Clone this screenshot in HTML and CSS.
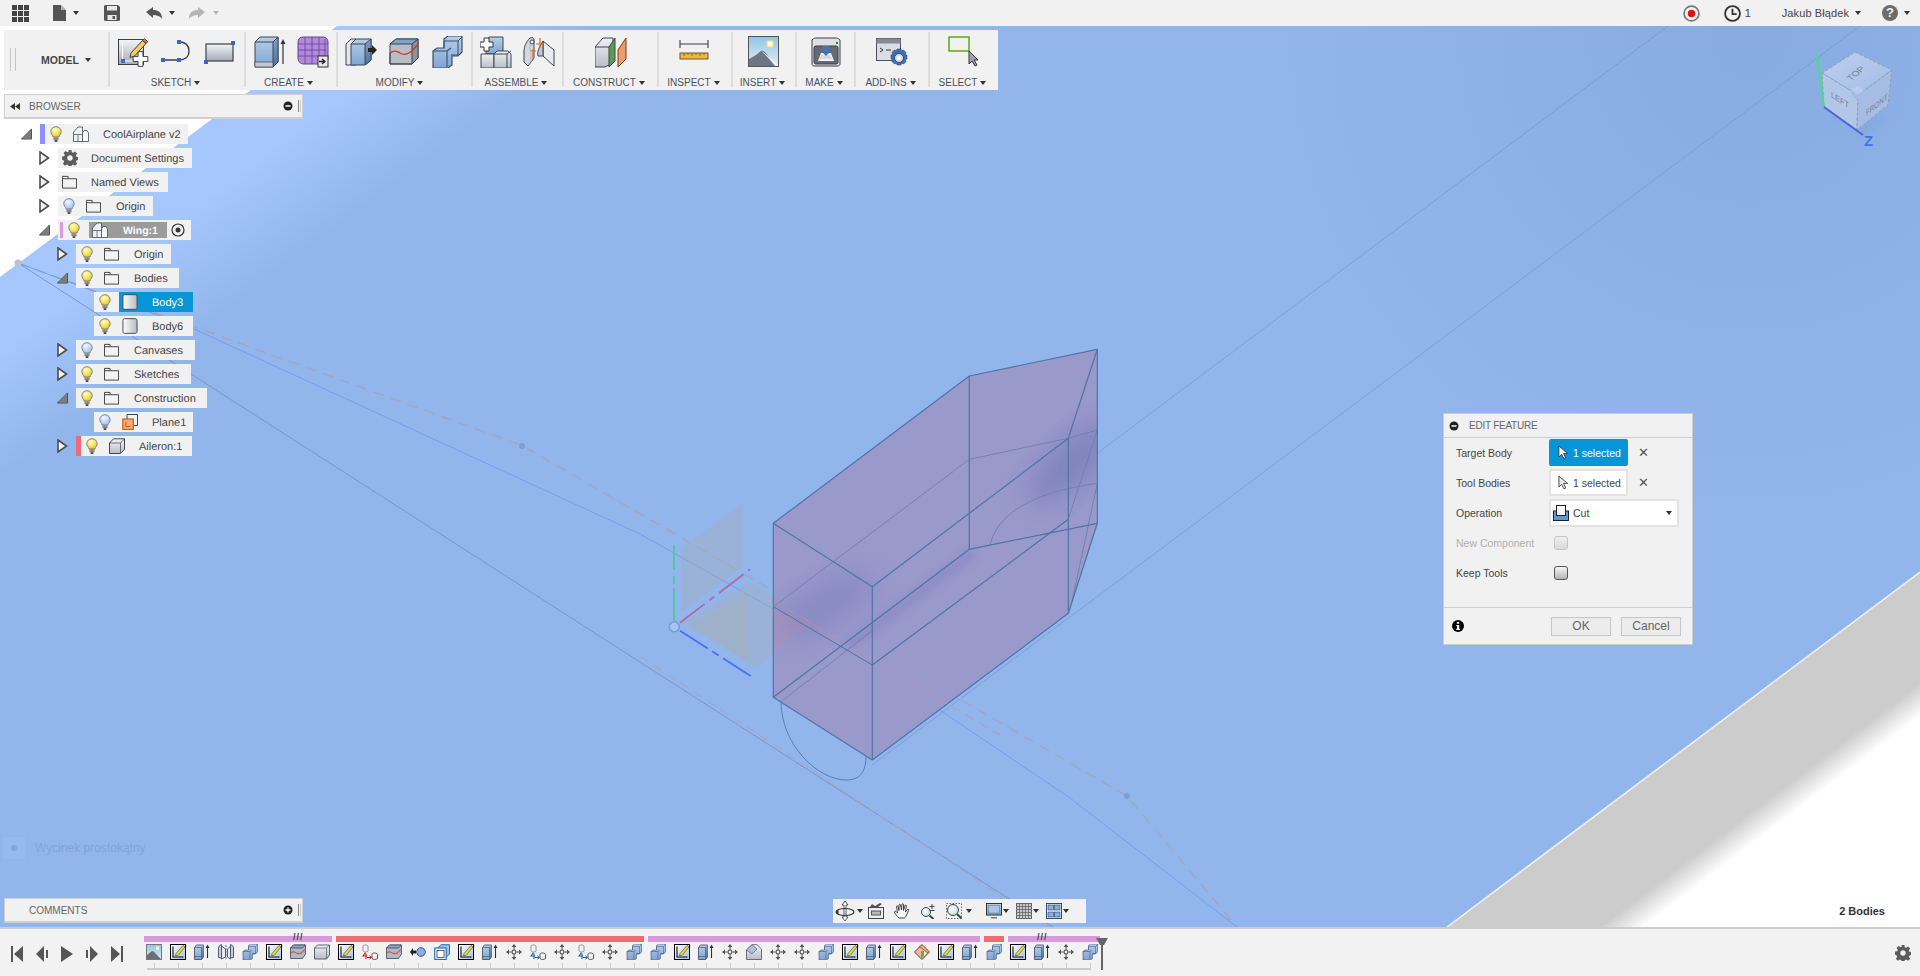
FILE: index.html
```html
<!DOCTYPE html>
<html lang="en">
<head>
<meta charset="utf-8">
<title>CoolAirplane v2</title>
<link rel="stylesheet" href="styles.css">
</head>
<body>
<svg class="sprite" aria-hidden="true">
  <defs>
    <linearGradient id="gBlue" x1="0" y1="0" x2="0" y2="1"><stop offset="0" stop-color="#b6cfe9"/><stop offset="1" stop-color="#7fa5d3"/></linearGradient>
    <linearGradient id="gSide" x1="0" y1="0" x2="0" y2="1"><stop offset="0" stop-color="#7ea0c8"/><stop offset="1" stop-color="#4f739f"/></linearGradient>
    <linearGradient id="gGrey" x1="0" y1="0" x2="0" y2="1"><stop offset="0" stop-color="#f1f2f5"/><stop offset="1" stop-color="#b9bdc6"/></linearGradient>
    <linearGradient id="gRect" x1="0" y1="0" x2="0" y2="1"><stop offset="0" stop-color="#f4f5f8"/><stop offset="1" stop-color="#a4a9b8"/></linearGradient>
    <linearGradient id="gSky" x1="0" y1="0" x2="0" y2="1"><stop offset="0" stop-color="#8fc5e6"/><stop offset="1" stop-color="#e3eff3"/></linearGradient>
    <linearGradient id="gSketch" x1="0" y1="0" x2="1" y2="1"><stop offset="0" stop-color="#ffffff"/><stop offset="1" stop-color="#9cc2e6"/></linearGradient>
    <linearGradient id="gCyl" x1="0" y1="0" x2="1" y2="0"><stop offset="0" stop-color="#ffffff"/><stop offset="1" stop-color="#b7bac0"/></linearGradient>
    <radialGradient id="gBulbY" cx=".4" cy=".3" r=".7"><stop offset="0" stop-color="#fffbd0"/><stop offset=".6" stop-color="#f9e35c"/><stop offset="1" stop-color="#e8c52c"/></radialGradient>
    <radialGradient id="gBulbB" cx=".4" cy=".3" r=".7"><stop offset="0" stop-color="#f4f7ff"/><stop offset="1" stop-color="#a3bfee"/></radialGradient>
    <radialGradient id="gLens" cx=".4" cy=".4" r=".7"><stop offset="0" stop-color="#ffffff"/><stop offset="1" stop-color="#b9d9dd"/></radialGradient>
    <filter id="blur4" x="-30%" y="-30%" width="160%" height="160%"><feGaussianBlur stdDeviation="5"/></filter>
    <filter id="blur8" x="-40%" y="-40%" width="180%" height="180%"><feGaussianBlur stdDeviation="14"/></filter>
  </defs>

  <symbol id="i-bulb-y" viewBox="0 0 12 17"><path d="M6 .7C3 .7.8 2.9.8 5.6c0 2.2 1.6 3.1 2.3 5.4h5.8c.7-2.3 2.3-3.2 2.3-5.4C11 2.9 9 .7 6 .7z" fill="url(#gBulbY)" stroke="#77757a" stroke-width=".9"/><path d="M3.4 11.2h5.2v2.8H3.4z" fill="#8b8b8b"/><path d="M4.6 14h2.8v2H4.6z" fill="#555"/></symbol>
  <symbol id="i-bulb-b" viewBox="0 0 12 17"><path d="M6 .7C3 .7.8 2.9.8 5.6c0 2.2 1.6 3.1 2.3 5.4h5.8c.7-2.3 2.3-3.2 2.3-5.4C11 2.9 9 .7 6 .7z" fill="url(#gBulbB)" stroke="#6f7c95" stroke-width=".9"/><path d="M3.4 11.2h5.2v2.8H3.4z" fill="#8b8b8b"/><path d="M4.6 14h2.8v2H4.6z" fill="#555"/></symbol>
  <symbol id="i-folder" viewBox="0 0 16 14"><path d="M.5 1h6v2.500h9v10H.5z" fill="#f3f3f3" stroke="#3d3d3d"/><path d="M.5 3.500h6" stroke="#3d3d3d"/></symbol>
  <symbol id="i-gear" viewBox="0 0 16 16"><path d="M6.6 0h2.8l.4 2.200 1.400.6 1.900-1.300 2 2-1.300 1.900.6 1.400 2.100.4v2.800l-2.100.4-.6 1.400 1.300 1.900-2 2-1.900-1.300-1.400.6-.4 2.100H6.600l-.4-2.100-1.400-.6-1.900 1.300-2-2 1.300-1.900-.6-1.400L0 9.400V6.600l2.200-.4.6-1.400L1.500 2.900l2-2 1.900 1.300 1.400-.6z" fill="#5c5c5c"/><circle cx="8" cy="8" r="2.700" fill="#f1f1f1"/></symbol>
  <symbol id="i-comp" viewBox="0 0 16 16"><path d="M.5 6L5 1h4.500v14.500H.5z" fill="#eef0f4" stroke="#555b68" stroke-width=".9"/><path d="M9.500 7l1.500-2.500h3L15.500 7v8.500h-6z" fill="#f8f8fa" stroke="#555b68" stroke-width=".9"/><path d="M.5 8.500h9M5 8.500v7" stroke="#555b68" stroke-width=".8" fill="none"/></symbol>
  <symbol id="i-body" viewBox="0 0 16 17"><path d="M2.500.7h11c1.200 0 2 .8 2 2v11.600c0 1.200-.8 2-2 2h-11c-1.200 0-2-.8-2-2V2.700c0-1.200.8-2 2-2z" fill="url(#gCyl)" stroke="#3f4552"/></symbol>
  <symbol id="i-plane" viewBox="0 0 16 16"><path d="M5 .5h10.500v11H12" fill="none" stroke="#3f4552"/><path d="M5 .5V5" fill="none" stroke="#3f4552"/><rect x=".8" y="5" width="10.500" height="10.500" fill="#f6ac72" stroke="#cb5c1e" stroke-width="1.200"/><path d="M3.800 8v4.500h4.500" fill="none" stroke="#cb5c1e"/></symbol>
  <symbol id="i-box" viewBox="0 0 16 16"><path d="M.5 5L4.500.8h11v10.500L11.500 15.500H.5z" fill="url(#gGrey)" stroke="#3f4552"/><path d="M.5 5h11v10.500M11.500 5l4-4.200" fill="none" stroke="#3f4552" stroke-width=".7"/></symbol>
  <symbol id="i-radio" viewBox="0 0 14 14"><circle cx="7" cy="7" r="6" fill="#f1f1f1" stroke="#333" stroke-width="1.200"/><circle cx="7" cy="7" r="2.500" fill="#333"/></symbol>
  <symbol id="i-open" viewBox="0 0 11 14"><path d="M1 1l8.500 6L1 13z" fill="#f4f4f4" stroke="#4d4d4d" stroke-width="1.600"/></symbol>
  <symbol id="i-down" viewBox="0 0 12 12"><path d="M11.500.5V11.500H.5z" fill="#8d8d8d" stroke="#444"/><path d="M11 1.500V11H2z" fill="#7c7c7c"/></symbol>

  <symbol id="i-sketch" viewBox="0 0 32 32"><rect x=".5" y="3.500" width="25" height="25" fill="url(#gRect)" stroke="#3c3f47"/><path d="M4.500 6v19H24" fill="none" stroke="#fff"/><rect x="3" y="23" width="4" height="4" fill="#3e6fc8"/><path d="M13 17L24.500 4.500l3.500 3L16.500 20l-4.500 1.500z" fill="#f5cf5c" stroke="#3c3f47"/><path d="M24.500 4.500l1.800-1.800 3.500 3-1.800 1.800z" fill="#d97b52" stroke="#3c3f47"/><path d="M22 16.500h5v5h5v5h-5v5h-5v-5h-5v-5h5z" transform="translate(-1.500 -.5) scale(.98)" fill="#fff" stroke="#3c3f47"/></symbol>
  <symbol id="i-line" viewBox="0 0 32 32"><path d="M2 24h16c6 0 10-3 10-9 0-6-4-9-10-9" fill="none" stroke="#3c3f47" stroke-width="1.300"/><g fill="#3268c9"><rect y="22" width="4" height="4"/><rect x="16" y="22" width="4" height="4"/><rect x="16" y="4" width="4" height="4"/></g></symbol>
  <symbol id="i-rect" viewBox="0 0 32 32"><rect x="2" y="8" width="27" height="17" fill="url(#gRect)" stroke="#3c3f47" stroke-width="1.200"/><rect x="27" y="5" width="4" height="4" fill="#3268c9"/><rect y="24" width="4" height="4" fill="#3268c9"/></symbol>
  <symbol id="i-extrude" viewBox="0 0 32 32"><path d="M1 6l5-5h18v25l-5 5H1z" fill="url(#gBlue)" stroke="#3f4552"/><path d="M19 6l5-5v25l-5 5z" fill="url(#gSide)" stroke="#3f4552"/><path d="M1 6h18M6 1" fill="none" stroke="#3f4552"/><path d="M1 26h18v5H1z" fill="#c5c8cf" stroke="#3f4552" stroke-width=".7"/><path d="M29 28V6" stroke="#333" stroke-width="1.200"/><path d="M29 3l2.500 5h-5z" fill="#333"/></symbol>
  <symbol id="i-mesh" viewBox="0 0 32 32"><path d="M6 1h20c3 0 5 2 5 5v16c0 4-3 6-6 6H7c-4 0-6-3-6-6V6c0-3 2-5 5-5z" fill="#b485e4" stroke="#5d4a7c"/><path d="M1 8h30M1 14h28M1 20h26M8 1v27M15 1v27M22 1v27M28 3v18" fill="none" stroke="#5d4a7c" stroke-width=".8"/><rect x="21" y="20" width="10" height="11" fill="#e8e8e8" stroke="#333"/><path d="M22 25.500h5M25 23l3 2.500-3 2.500" fill="none" stroke="#222" stroke-width="1.300"/></symbol>
  <symbol id="i-press" viewBox="0 0 32 32"><path d="M1 8l5-5h5v26H1z" fill="#e4e6ea" stroke="#3f4552"/><path d="M6 8l5-5h15v21l-6 5H6z" fill="url(#gBlue)" stroke="#3f4552"/><path d="M20 8l6-5v21l-6 5z" fill="url(#gSide)" stroke="#3f4552"/><path d="M6 8h14" stroke="#3f4552"/><path d="M23 12h4V9l5 5-5 5v-3h-4z" fill="#222"/></symbol>
  <symbol id="i-fillet" viewBox="0 0 32 32"><path d="M2 8l6-5h22v19l-6 6H2z" fill="#b8bdc6" stroke="#3f4552"/><path d="M2 8l6-5h22l-6 5z" fill="#7da4d1" stroke="#3f4552"/><path d="M24 8l6-5v19l-6 6z" fill="#8d929c" stroke="#3f4552"/><path d="M2 17c4-3 7-2 10 0s7 2 12-2l6-7" fill="none" stroke="#d8301f" stroke-width="1.200"/><path d="M2 17v11h22" fill="none" stroke="#3f4552"/></symbol>
  <symbol id="i-combine" viewBox="0 0 32 32"><path d="M2 15l4-3h7V3l4-3h14v16l-4 4h-6v9l-4 3H2z" fill="url(#gBlue)" stroke="#3a4f6e" stroke-width="1.200"/><path d="M13 12V5h14v14h-7" fill="none" stroke="#3a4f6e"/><path d="M2 15h14v16M16 15l4-3" fill="none" stroke="#3a4f6e" stroke-width="1.100"/><path d="M27 5l4-4" stroke="#3a4f6e"/></symbol>
  <symbol id="i-newcomp" viewBox="0 0 32 32"><path d="M6 4l3-3h14v14l-3 3H6z" fill="url(#gBlue)" stroke="#3f4552"/><path d="M1 18h13v14H1z" fill="url(#gGrey)" stroke="#3f4552"/><path d="M14 18l3-3h11l3 3v14H14z" fill="url(#gGrey)" stroke="#3f4552"/><path d="M14 18h13l4-3M27 18v14" fill="none" stroke="#3f4552"/><path d="M4 2h5v4h4v5H9v4H4v-4H0V6h4z" fill="#fff" stroke="#333"/></symbol>
  <symbol id="i-joint" viewBox="0 0 32 32"><path d="M1 15c0-4 2-9 6-13 3-1 4 0 4 2v18l-6 8-4-4z" fill="#d4d7de" stroke="#3f4552"/><circle cx="9" cy="6" r="2" fill="#fff" stroke="#3f4552"/><path d="M7 8v6M8 17v9" stroke="#b5b8c0"/><path d="M20 5l11 9v16l-11-10z" fill="#e9ebee" stroke="#3f4552"/><path d="M15 20c-1-4 1-9 5-15v15z" fill="#c3c7cf" stroke="#3f4552"/><path d="M17 2v10M13 8h8M10 13v10M7 15h6" stroke="#e56b1b" stroke-width="1.200"/></symbol>
  <symbol id="i-construct" viewBox="0 0 32 32"><path d="M0 11l8-9h10v25l-8 4H0z" fill="url(#gGrey)" stroke="#3f4552"/><path d="M14 11l6-9v23l-6 6z" fill="#5c9a52" stroke="#3f4552"/><path d="M0 11h14" stroke="#3f4552"/><path d="M23 14l8-12v21l-8 8z" fill="#ef9d68" stroke="#7d3a16"/></symbol>
  <symbol id="i-ruler" viewBox="0 0 32 32"><path d="M1 8h28M1 4v8M29 4v8" stroke="#3c3f47" stroke-width="1.100" fill="none"/><rect x="1" y="17" width="28" height="6" fill="#efb63a" stroke="#6a5a35"/><path d="M5 17v3M9 17v2M13 17v3M17 17v2M21 17v3M25 17v2" stroke="#6a5a35" stroke-width=".8"/></symbol>
  <symbol id="i-image" viewBox="0 0 32 32"><rect x=".5" y=".5" width="30" height="30" fill="url(#gSky)" stroke="#555"/><rect x="19" y="5" width="6" height="6" fill="#fffde0" stroke="#f4d883"/><path d="M1 30V23l7-4 5-4c3-1 5 2 8 6 3 3 6 7 9 9z" fill="#6e7583"/><path d="M13 15c4 2 11 9 17 13v2h-3c-4-5-9-11-14-15z" fill="#eef0f3"/></symbol>
  <symbol id="i-printer" viewBox="0 0 32 32"><path d="M2 4c2-2 3-2 5-2h18c2 0 3 0 5 2v24c0 1-1 2-2 2H4c-1 0-2-1-2-2z" fill="#dfe0e3" stroke="#3c3f47"/><rect x="4" y="10" width="24" height="18" rx="2" fill="#666a75" stroke="#3c3f47"/><path d="M8 25l3-8h10l3 8z" fill="#f3f3f3"/><path d="M13 10h6v7l-3 3-3-3z" fill="#3c76c0"/><rect x="26" y="6" width="2" height="2" fill="#1d8a25"/><path d="M10 22h12M11 20h10" stroke="#aaa" stroke-width=".7"/></symbol>
  <symbol id="i-addins" viewBox="0 0 32 32"><rect x=".5" y="2.500" width="24" height="22" fill="#dcdde2" stroke="#4b4f59"/><rect x=".5" y="2.500" width="24" height="5" fill="#868a94"/><path d="M4 12l3 2-3 2M10 14h5" fill="none" stroke="#333"/><path d="M21 13h4l.5 2 2-1 2.500 2.500-1 2 2 .5v4l-2 .5 1 2-2.500 2.500-2-1-.5 2h-4l-.5-2-2 1-2.500-2.500 1-2-2-.5v-4l2-.5-1-2L18.500 14l2 1z" fill="#3f6fb0" stroke="#28497c" stroke-width=".6"/><circle cx="23" cy="22" r="4.500" fill="#cfdff3" stroke="#28497c"/><circle cx="23" cy="22" r="2" fill="#fff"/></symbol>
  <symbol id="i-select" viewBox="0 0 32 32"><rect x="1" y="1" width="20" height="14" fill="none" stroke="#5ea512" stroke-width="1.500"/><path d="M21 15v13l3-3 3 5 2-1-3-5h4z" fill="#9ea2ac" stroke="#333"/></symbol>
  <symbol id="i-cursor" viewBox="0 0 12 16"><path d="M1 1v12l3-3 2.500 5 2-1-2.500-5h4.500z" fill="currentColor" stroke="#333" stroke-width=".9"/></symbol>
  <symbol id="i-cut" viewBox="0 0 16 16"><rect x=".5" y="6" width="15" height="9.500" fill="#5a98d6" stroke="#222"/><rect x="3.500" y=".5" width="9" height="10" fill="#f6f6f6" stroke="#222"/></symbol>

  <symbol id="n-orbit" viewBox="0 0 20 20"><path d="M10 0l3 4h-2v12l2 0-3 4-3-4h2V4H7z" fill="#fff" stroke="#333" stroke-width=".8"/><ellipse cx="10" cy="11" rx="9" ry="3.500" fill="none" stroke="#333" stroke-width="1.100"/><path d="M.5 11l3 2.500V9z" fill="#333"/></symbol>
  <symbol id="n-look" viewBox="0 0 16 16"><rect x=".5" y="4.500" width="15" height="11" fill="#efefef" stroke="#444"/><rect x="3.500" y="8" width="9" height="4" fill="#bbb" stroke="#555"/><path d="M2 4l2-3 3 2 5-3 2 1-4 3z" fill="#555"/></symbol>
  <symbol id="n-pan" viewBox="0 0 16 16"><path d="M5 15c-2-2-4-4-4.500-6 0-1 1-1 1.500-.5L3.500 10 2.500 3.500c0-1 1.300-1 1.500 0L5 7.500 5 2c0-1 1.500-1 1.500 0L7.500 7 8 1.500c0-1 1.500-1 1.500 0V7.500l1.500-5c.3-1 1.500-.6 1.300.4L11.500 9l2-2.500c.7-.7 1.700 0 1.200.8L12 13c-.5 1-1 2-1.500 2z" fill="#f7f7f7" stroke="#333" stroke-width=".9"/></symbol>
  <symbol id="n-zoom" viewBox="0 0 16 16"><circle cx="6" cy="9" r="4.500" fill="url(#gLens)" stroke="#444"/><path d="M9.500 12.500l4 3.500" stroke="#444" stroke-width="2"/><path d="M12 1v5M9.500 3.500h5M9.500 7.500h5" stroke="#444" fill="none"/></symbol>
  <symbol id="n-fit" viewBox="0 0 16 16"><rect x=".5" y=".5" width="15" height="15" fill="none" stroke="#666" stroke-dasharray="1.500 1.500"/><circle cx="7" cy="7" r="5.500" fill="url(#gLens)" stroke="#444"/><path d="M11 11l4.500 4.500" stroke="#444" stroke-width="2"/></symbol>
  <symbol id="n-display" viewBox="0 0 16 16"><rect x=".5" y=".5" width="15" height="11.500" fill="url(#gBlue)" stroke="#333"/><rect x="2.500" y="2.500" width="11" height="7.500" fill="#a9c6e8" stroke="#666" stroke-width=".5"/><path d="M5 14h6v1.500H5z" fill="#777"/></symbol>
  <symbol id="n-grid" viewBox="0 0 16 16"><rect x=".5" y=".5" width="15" height="15" fill="#c9c9c9" stroke="#666"/><path d="M3.500 0v16M6.500 0v16M9.500 0v16M12.500 0v16M0 3.500h16M0 6.500h16M0 9.500h16M0 12.500h16" stroke="#666" stroke-width=".8"/></symbol>
  <symbol id="n-views" viewBox="0 0 16 16"><rect x=".5" y=".5" width="15" height="15" fill="#fff" stroke="#2d4d7a"/><rect x="2" y="2" width="5.500" height="5" fill="#8db0da" stroke="#2d4d7a" stroke-width=".7"/><rect x="8.500" y="2" width="5.500" height="5" fill="#8db0da" stroke="#2d4d7a" stroke-width=".7"/><rect x="2" y="9" width="5.500" height="5" fill="#8db0da" stroke="#2d4d7a" stroke-width=".7"/><rect x="8.500" y="9" width="5.500" height="5" fill="#8db0da" stroke="#2d4d7a" stroke-width=".7"/></symbol>

  <symbol id="t-sketch" viewBox="0 0 16 16"><rect x=".5" y=".5" width="15" height="15" fill="url(#gSketch)" stroke="#000"/><path d="M3 2.500V13h10.500" fill="none" stroke="#111" stroke-width="1.100"/><path d="M6 9.500L13 1.500l2 1.500-6.500 8-3 1z" fill="#f6d430" stroke="#444" stroke-width=".6"/></symbol>
  <symbol id="t-image" viewBox="0 0 16 16"><rect x=".5" y=".5" width="15" height="15" fill="url(#gSky)" stroke="#777"/><rect x="10" y="2.500" width="3" height="3" fill="#fff7c9"/><path d="M1 15v-4l5-4c2 0 4 3 9 8z" fill="#686f7e"/></symbol>
  <symbol id="t-extrude" viewBox="0 0 16 16"><path d="M.5 3.500l2-2.500h7v12l-2 2.500h-7z" fill="url(#gBlue)" stroke="#4a5568" stroke-width=".9"/><path d="M7.500 3.500l2-2.500v12l-2 2.500z" fill="url(#gSide)"/><path d="M.5 3.500h7v12M.5 12.500h7" fill="none" stroke="#4a5568" stroke-width=".7"/><path d="M13.500 14V3" stroke="#333" stroke-width="1.100"/><path d="M13.500 .5l2 3.500h-4z" fill="#333"/></symbol>
  <symbol id="t-joint" viewBox="0 0 16 16"><path d="M.5 4c0-1 1-3 3-3.500V14l-3-.5zM15.500 4c0-1-1-3-3-3.500V14l3-.5z" fill="#c9ced9" stroke="#3f4f6a" stroke-width=".9"/><path d="M3.500 2l4 3v8l-4 2zM12.500 2l-3 3v8l3 2z" fill="#e8eaee" stroke="#3f4f6a" stroke-width=".9"/><path d="M8 1v14" stroke="#555" stroke-dasharray="2 1" stroke-width=".8"/></symbol>
  <symbol id="t-wave" viewBox="0 0 16 16"><path d="M.5 4l3-3h12v9l-3 4.500H.5z" fill="#b2b8c2" stroke="#4a5568" stroke-width=".9"/><path d="M.5 4l3-3h12l-3 3z" fill="#87a9d1" stroke="#4a5568" stroke-width=".9"/><path d="M.5 9c3-2 4-1 6 0s4 1 6-1l3-3" fill="none" stroke="#d8301f"/></symbol>
  <symbol id="t-box" viewBox="0 0 16 16"><path d="M.5 4L3.500 1h12v10l-3 4H.5z" fill="url(#gGrey)" stroke="#4a5568" stroke-width=".9"/><path d="M.5 4h12v11M12.500 4l3-3" fill="none" stroke="#4a5568" stroke-width=".7"/></symbol>
  <symbol id="t-align-r" viewBox="0 0 16 16"><path d="M1 2.500c0-2 5-2 5 0v4c0 2-5 2-5 0z" fill="#f2f2f2" stroke="#777" stroke-width=".8"/><path d="M10 10.500c0-2 5.500-2 5.500 0v3.500c0 2-5.500 2-5.500 0z" fill="#f2f2f2" stroke="#444" stroke-width=".9"/><path d="M3.500 8.500L1 12h4M4 9.500V15" fill="none" stroke="#d9141e" stroke-width="1.100"/><path d="M5 13.500h4M7.500 12l2 1.500-2 1.500" fill="none" stroke="#d9141e"/></symbol>
  <symbol id="t-align-b" viewBox="0 0 16 16"><path d="M1 2.500c0-2 5-2 5 0v4c0 2-5 2-5 0z" fill="#f2f2f2" stroke="#777" stroke-width=".8"/><path d="M10 10.500c0-2 5.500-2 5.500 0v3.500c0 2-5.500 2-5.500 0z" fill="#f2f2f2" stroke="#444" stroke-width=".9"/><path d="M3.500 8.500L1 12h4M4 9.500V15" fill="none" stroke="#1565c0" stroke-width="1.100"/><path d="M5 13.500h4M7.500 12l2 1.500-2 1.500" fill="none" stroke="#1565c0"/></symbol>
  <symbol id="t-ball" viewBox="0 0 16 16"><circle cx="11" cy="8" r="4.300" fill="#8eaedb" stroke="#3f5b8a"/><path d="M6 6.500H3V4L0 8l3 4V9.500h3z" fill="#222"/></symbol>
  <symbol id="t-offset" viewBox="0 0 16 16"><path d="M4 4l3-3.300h8.500V10l-3 3" fill="#9dc1ea" stroke="#1f6fbf"/><rect x=".7" y="4" width="11.500" height="11.500" fill="#e8ecf2" stroke="#1f6fbf" stroke-width="1.100"/><rect x="3" y="6.500" width="7" height="7" fill="#fff" stroke="#444" stroke-width=".8"/></symbol>
  <symbol id="t-move" viewBox="0 0 16 16"><path d="M8 0l2.500 3h-5zM8 16l-2.500-3h5zM0 8l3-2.500v5zM16 8l-3 2.500v-5z" fill="#555"/><path d="M8 3v3M8 10v3M3 8h3M10 8h3" stroke="#555" stroke-width="1.100"/><rect x="6.300" y="6.300" width="3.400" height="3.400" fill="none" stroke="#555" stroke-width=".9"/></symbol>
  <symbol id="t-chamfer" viewBox="0 0 16 16"><path d="M.5 6L6 .7h5L15.500 5v10.500H.5z" fill="url(#gGrey)" stroke="#5c6068" stroke-width=".9"/><path d="M.5 6L6 .7l5 4.300L6 10z" fill="#a9c1df" stroke="#5c6068" stroke-width=".7"/></symbol>
  <symbol id="t-diamond" viewBox="0 0 16 16"><path d="M8 .5l7.500 7.500-7.500 7.500L.5 8z" fill="#f0b893" stroke="#6a3e1e"/><path d="M5 2l9 7" stroke="#6a3e1e" stroke-width=".7"/><path d="M7 7l3 0 0 5-3 3z" fill="#6fa860"/><path d="M10 7l2.500 2-2.500 3z" fill="#eee"/></symbol>
</svg>

<header class="topbar">
  <svg class="top-apps" viewBox="0 0 17 17"><path d="M0 0h5v5H0zM6 0h5v5H6zM12 0h5v5h-5zM0 6h5v5H0zM6 6h5v5H6zM12 6h5v5h-5zM0 12h5v5H0zM6 12h5v5H6zM12 12h5v5h-5z" fill="#444"/></svg>
  <svg class="top-file" viewBox="0 0 13 16"><path d="M0 0h8l5 5v11H0z" fill="#555"/><path d="M8 0v5h5" fill="#fff" opacity=".55"/></svg>
  <span class="caret top-caret-file"></span>
  <svg class="top-save" viewBox="0 0 16 16"><path d="M0 1.500C0 .7.700 0 1.500 0H14l2 2v12.500c0 .8-.7 1.500-1.500 1.500h-13C.7 16 0 15.300 0 14.500z" fill="#555"/><rect x="3" y="1" width="10" height="4.500" fill="#e6e6e6"/><rect x="3.500" y="10" width="9" height="5" fill="#e6e6e6"/><rect x="8.500" y="11" width="2.500" height="3" fill="#555"/></svg>
  <svg class="top-undo" viewBox="0 0 16 12"><path d="M0 5l7-5v3c5 0 9 2 9 9-2-3-5-4-9-4v3z" fill="#555"/></svg>
  <span class="caret top-caret-undo"></span>
  <svg class="top-redo" viewBox="0 0 16 12"><path d="M16 5L9 0v3C4 3 0 5 0 12c2-3 5-4 9-4v3z" fill="#b5b5b5"/></svg>
  <span class="caret caret-light"></span>
  <svg class="top-rec" viewBox="0 0 16 16"><circle cx="8" cy="8" r="7" fill="#f1f1f1" stroke="#777" stroke-width="1.600"/><circle cx="8" cy="8" r="3.500" fill="#e01313"/></svg>
  <svg class="top-clock" viewBox="0 0 16 16"><circle cx="8" cy="8" r="7" fill="#f1f1f1" stroke="#333" stroke-width="1.700"/><path d="M8 3.500V8.500h4" fill="none" stroke="#333" stroke-width="1.700"/></svg>
  <span class="top-count">1</span>
  <span class="top-user">Jakub Błądek</span>
  <span class="caret top-caret-user"></span>
  <svg class="top-help" viewBox="0 0 16 16"><circle cx="8" cy="8" r="8" fill="#6b6b6b"/><text x="8" y="12" text-anchor="middle" class="help-q">?</text></svg>
  <span class="caret"></span>
</header>

<main class="viewport">
  <svg class="scene" viewBox="0 26 1920 901" width="1920" height="901">
    <defs>
      <linearGradient id="gPlane" gradientUnits="userSpaceOnUse" x1="0" y1="350" x2="62" y2="433"><stop offset="0" stop-color="#a5c7fd"/><stop offset="1" stop-color="#92b5eb"/></linearGradient>
      <radialGradient id="gCorner" gradientUnits="userSpaceOnUse" cx="1750" cy="40" r="480"><stop offset="0" stop-color="#88ace2"/><stop offset="1" stop-color="#88ace2" stop-opacity="0"/></radialGradient>
      <linearGradient id="gFloor" gradientUnits="userSpaceOnUse" x1="1600" y1="927" x2="1616" y2="948"><stop offset="0" stop-color="#cccccc"/><stop offset="1" stop-color="#ffffff"/></linearGradient>
      <linearGradient id="gCube" x1="0" y1="0" x2="1" y2="1"><stop offset="0" stop-color="#bccfee"/><stop offset="1" stop-color="#a4bde6"/></linearGradient>
      <clipPath id="clipBody"><path d="M773.300 523.300L969.300 376 1097.300 349.300V523.300L1068.300 613.300 872.300 760 773.300 697.300z"/></clipPath>
    </defs>
    <rect x="0" y="26" width="1920" height="901" fill="url(#gPlane)"/>
    <rect x="0" y="26" width="1920" height="901" fill="url(#gCorner)"/>
    <path d="M0 26H337L0 277z" fill="#fff"/>
    <path d="M1447 927L1920 572V927z" fill="url(#gFloor)"/>
    <path d="M1447 927L1920 572" stroke="#eef2f8" stroke-width="1.500"/>

    <g fill="none">
      <path d="M1668 26L1075 470" stroke="#7a9bd0" stroke-width=".8"/>
      <path d="M1860 26L872 765" stroke="#7a9bd0" stroke-width=".8"/>
      <path d="M18 263L1053 927" stroke="#7393cc" stroke-width=".9"/>
      <path d="M640 656L1048 927" stroke="#a6a8bf" stroke-width="1.200" stroke-dasharray="10 6"/>
      <path d="M18 263L523 446L1127 796L1237 927" stroke="#a2a6bf" stroke-width="1.300" stroke-dasharray="11 7"/>
      <path d="M18 263L192 328L640 534L873 665L1070 798L1237 927" stroke="#6f9cea" stroke-width=".9"/>
    </g>
    <circle cx="18" cy="263" r="3.500" fill="#b9c3d6"/>
    <circle cx="522" cy="446" r="3" fill="#7f9ed4"/>
    <circle cx="1127" cy="796" r="3" fill="#7f9ed4"/>

    <g fill="#a9aeb0" fill-opacity=".34">
      <path d="M681.700 548.300L742.700 503.300V566.700L681.700 611.700z"/>
      <path d="M683 623L750 581.700 815 623 756.700 667.300z"/>
      <path d="M691.700 625L748 593V663z"/>
    </g>

    <path d="M773.300 523.300L969.300 376 1097.300 349.300V523.300L1068.300 613.300 872.300 760 773.300 697.300z" fill="#9a99cc"/>
    <g clip-path="url(#clipBody)">
      <ellipse cx="825" cy="605" rx="55" ry="22" transform="rotate(-30 825 605)" fill="#7a7dbb" opacity=".5" filter="url(#blur8)"/>
      <ellipse cx="1072" cy="463" rx="55" ry="22" transform="rotate(-42 1072 463)" fill="#6b72ad" opacity=".55" filter="url(#blur8)"/>
      <path d="M847 647L973 553" stroke="#7376b5" stroke-width="6" opacity=".55" filter="url(#blur4)"/>
      <path d="M773 606L815 623 773 650z" fill="#b78da8" opacity=".25"/>
    </g>
    <g fill="none" stroke="#6e7fb0" stroke-width=".9">
      <path d="M773.300 606.700L969.300 459.300 1068.300 438.300 1097.300 430"/>
      <path d="M782 701L873 630"/>
      <path d="M1072 601.700L1097.300 483.300"/>
      <path d="M1068.300 519.300L1097.300 430"/>
      <path d="M990 545C1000 505 1050 490 1097.300 483.300"/>
    </g>
    <g fill="none" stroke="#c08ea8" stroke-width="1" stroke-dasharray="10 6" opacity=".7"><path d="M773 600L1000 735"/></g>
    <g fill="none" stroke="#4e74a5" stroke-width="1.200" stroke-linejoin="round">
      <path d="M773.300 523.300L969.300 376 1097.300 349.300V523.300L1068.300 613.300 872.300 760 773.300 697.300z"/>
      <path d="M773.300 523.300L872.300 586.700 1068.300 438.300 1097.300 349.300"/>
      <path d="M872.300 586.700V760"/>
      <path d="M1068.300 438.300V613.300"/>
      <path d="M969.300 376V549.300L1097.300 523.300"/>
      <path d="M773.300 697.300L969.300 549.300"/>
      <path d="M872.300 665L1068.300 519.300"/>
      <path d="M773.300 606.700L872.300 665" stroke-width="1"/>
    </g>
    <path d="M781 701C781 745 818 780 846 780C860 780 866 772 866 756" fill="none" stroke="#5a80b2" stroke-width="1"/>

    <path d="M674 545V620" stroke="#50c89a" stroke-width="1.800" stroke-dasharray="25 6 8 4 33"/>
    <path d="M680 622.700L750 569.300" stroke="#b56a9c" stroke-width="1.800" stroke-dasharray="31 6 6 6 31 6 2 100"/>
    <path d="M680 630.700L757 680" stroke="#4a6eff" stroke-width="1.800" stroke-dasharray="33 5 8 5 33 8 3 100"/>
    <circle cx="674.300" cy="626.700" r="5" fill="#a4c5f8" stroke="#7d9bd0" stroke-width="1.500"/>

    <g>
      <path d="M1824 107L1863 135 1889 115 1895 112 1860 125z" fill="#7d9fd6" opacity=".6" filter="url(#blur4)"/>
      <path d="M1855 52L1892 70 1858 95 1822 73z" fill="url(#gCube)" stroke="#8d9dbb" stroke-dasharray="3 2"/>
      <path d="M1822 73L1858 95 1857 130 1824 107z" fill="#b2c6e8" stroke="#8d9dbb" stroke-dasharray="3 2"/>
      <path d="M1892 70L1858 95 1857 130 1888 105z" fill="#a6bce2" stroke="#8d9dbb" stroke-dasharray="3 2"/>
      <path d="M1851 89l7-3 6 5-7 4z" fill="#b9cbe9"/>
      <path d="M1851 89l6 6v5l-6-5zM1857 95l7-4v5l-7 4z" fill="#a5bce3"/>
      <text class="cube-text" transform="matrix(.8 -.65 .8 .55 1851 81)">TOP</text>
      <text class="cube-text small" transform="matrix(.92 .58 0 1 1831 97)">LEFT</text>
      <text class="cube-text small" transform="matrix(.78 -.62 0 1 1866 116)">FRONT</text>
      <path d="M1817 58L1824 107" stroke="#4cd98a" stroke-width="2"/>
      <path d="M1824 107L1863 135" stroke="#4a66e0" stroke-width="2"/>
      <text class="axis-y" x="1813" y="62">Y</text>
      <text class="axis-z" x="1864" y="146">Z</text>
    </g>
  </svg>

  <section class="toolbar">
    <div class="tool-model"><span class="grip"></span><span class="model-label">MODEL</span><span class="caret"></span></div>
    <div class="tool-sec c-sketch"><div class="tool-icons"><svg class="ico32"><use href="#i-sketch"/></svg><svg class="ico32"><use href="#i-line"/></svg><svg class="ico32"><use href="#i-rect"/></svg></div><div class="tool-label">SKETCH<span class="caret"></span></div></div>
    <div class="tool-sec c-create"><div class="tool-icons"><svg class="ico32"><use href="#i-extrude"/></svg><svg class="ico32"><use href="#i-mesh"/></svg></div><div class="tool-label">CREATE<span class="caret"></span></div></div>
    <div class="tool-sec c-modify"><div class="tool-icons"><svg class="ico32"><use href="#i-press"/></svg><svg class="ico32"><use href="#i-fillet"/></svg><svg class="ico32"><use href="#i-combine"/></svg></div><div class="tool-label">MODIFY<span class="caret"></span></div></div>
    <div class="tool-sec"><div class="tool-icons"><svg class="ico32"><use href="#i-newcomp"/></svg><svg class="ico32"><use href="#i-joint"/></svg></div><div class="tool-label">ASSEMBLE<span class="caret"></span></div></div>
    <div class="tool-sec"><div class="tool-icons"><svg class="ico32"><use href="#i-construct"/></svg></div><div class="tool-label">CONSTRUCT<span class="caret"></span></div></div>
    <div class="tool-sec"><div class="tool-icons"><svg class="ico32"><use href="#i-ruler"/></svg></div><div class="tool-label">INSPECT<span class="caret"></span></div></div>
    <div class="tool-sec"><div class="tool-icons"><svg class="ico32"><use href="#i-image"/></svg></div><div class="tool-label">INSERT<span class="caret"></span></div></div>
    <div class="tool-sec"><div class="tool-icons"><svg class="ico32"><use href="#i-printer"/></svg></div><div class="tool-label">MAKE<span class="caret"></span></div></div>
    <div class="tool-sec"><div class="tool-icons"><svg class="ico32"><use href="#i-addins"/></svg></div><div class="tool-label">ADD-INS<span class="caret"></span></div></div>
    <div class="tool-sec"><div class="tool-icons"><svg class="ico32"><use href="#i-select"/></svg></div><div class="tool-label">SELECT<span class="caret"></span></div></div>
  </section>

  <aside class="browser">
    <div class="panel-head">
      <svg class="rewind" viewBox="0 0 10 7"><path d="M5 0v7L0 3.500zM10 0v7L5 3.500z" fill="#333"/></svg>
      <span class="panel-title">BROWSER</span>
      <svg class="dot-ico" viewBox="0 0 10 10"><circle cx="5" cy="5" r="4.500" fill="#222"/><path d="M2.500 5h5" stroke="#fff" stroke-width="1.500"/></svg>
      <span class="pin"></span>
    </div>
    <div class="tree">
      <div class="node d0"><svg class="exp"><use href="#i-down"/></svg><div class="pill w148"><span class="strip strip-blue"></span><svg class="bulb"><use href="#i-bulb-y"/></svg><svg class="nico"><use href="#i-comp"/></svg><span class="lbl">CoolAirplane v2</span></div></div>
      <div class="node d1"><svg class="exp-o"><use href="#i-open"/></svg><div class="pill plain w134"><svg class="nico first"><use href="#i-gear"/></svg><span class="lbl">Document Settings</span></div></div>
      <div class="node d1"><svg class="exp-o"><use href="#i-open"/></svg><div class="pill plain w110"><svg class="nico first folder"><use href="#i-folder"/></svg><span class="lbl">Named Views</span></div></div>
      <div class="node d1"><svg class="exp-o"><use href="#i-open"/></svg><div class="pill w95"><svg class="bulb"><use href="#i-bulb-b"/></svg><svg class="nico folder"><use href="#i-folder"/></svg><span class="lbl">Origin</span></div></div>
      <div class="node d1"><svg class="exp"><use href="#i-down"/></svg><div class="pill wing w133"><span class="strip strip-pink"></span><svg class="bulb"><use href="#i-bulb-y"/></svg><div class="sel-grey"><svg class="nico"><use href="#i-comp"/></svg><span class="lbl">Wing:1</span></div><svg class="radio"><use href="#i-radio"/></svg></div></div>
      <div class="node d2"><svg class="exp-o"><use href="#i-open"/></svg><div class="pill w95"><svg class="bulb"><use href="#i-bulb-y"/></svg><svg class="nico folder"><use href="#i-folder"/></svg><span class="lbl">Origin</span></div></div>
      <div class="node d2"><svg class="exp"><use href="#i-down"/></svg><div class="pill w103"><svg class="bulb"><use href="#i-bulb-y"/></svg><svg class="nico folder"><use href="#i-folder"/></svg><span class="lbl">Bodies</span></div></div>
      <div class="node d3"><div class="pill body-pill"><svg class="bulb"><use href="#i-bulb-y"/></svg><div class="sel-blue"><svg class="nico"><use href="#i-body"/></svg><span class="lbl">Body3</span></div></div></div>
      <div class="node d3"><div class="pill body-pill"><svg class="bulb"><use href="#i-bulb-y"/></svg><div class="sel-none"><svg class="nico"><use href="#i-body"/></svg><span class="lbl">Body6</span></div></div></div>
      <div class="node d2"><svg class="exp-o"><use href="#i-open"/></svg><div class="pill w119"><svg class="bulb"><use href="#i-bulb-b"/></svg><svg class="nico folder"><use href="#i-folder"/></svg><span class="lbl">Canvases</span></div></div>
      <div class="node d2"><svg class="exp-o"><use href="#i-open"/></svg><div class="pill w115"><svg class="bulb"><use href="#i-bulb-y"/></svg><svg class="nico folder"><use href="#i-folder"/></svg><span class="lbl">Sketches</span></div></div>
      <div class="node d2"><svg class="exp"><use href="#i-down"/></svg><div class="pill w131"><svg class="bulb"><use href="#i-bulb-y"/></svg><svg class="nico folder"><use href="#i-folder"/></svg><span class="lbl">Construction</span></div></div>
      <div class="node d3"><div class="pill body-pill"><svg class="bulb"><use href="#i-bulb-b"/></svg><div class="sel-none"><svg class="nico"><use href="#i-plane"/></svg><span class="lbl">Plane1</span></div></div></div>
      <div class="node d2"><svg class="exp-o"><use href="#i-open"/></svg><div class="pill w116"><span class="strip strip-red"></span><svg class="bulb"><use href="#i-bulb-y"/></svg><svg class="nico"><use href="#i-box"/></svg><span class="lbl">Aileron:1</span></div></div>
    </div>
  </aside>

  <div class="ghost"><span class="ghost-box"><span class="ghost-dot"></span></span><span class="ghost-text">Wycinek prostokątny</span></div>

  <div class="comments panel-head">
    <svg class="rewind hidden" viewBox="0 0 10 7"><path d="M5 0v7L0 3.500z"/></svg>
    <span class="panel-title">COMMENTS</span>
    <svg class="dot-ico" viewBox="0 0 10 10"><circle cx="5" cy="5" r="4.500" fill="#222"/><path d="M2.500 5h5M5 2.500v5" stroke="#fff" stroke-width="1.300"/></svg>
    <span class="pin"></span>
  </div>

  <nav class="navbar">
    <svg class="nav-orbit"><use href="#n-orbit"/></svg><span class="caret"></span>
    <svg class="nav-ico nav-look"><use href="#n-look"/></svg>
    <svg class="nav-ico"><use href="#n-pan"/></svg>
    <svg class="nav-ico"><use href="#n-zoom"/></svg>
    <svg class="nav-ico"><use href="#n-fit"/></svg><span class="caret caret-fit"></span>
    <svg class="nav-ico wide"><use href="#n-display"/></svg><span class="caret"></span>
    <svg class="nav-ico"><use href="#n-grid"/></svg><span class="caret"></span>
    <svg class="nav-ico"><use href="#n-views"/></svg><span class="caret"></span>
  </nav>

  <section class="dialog">
    <div class="dlg-head">
      <svg class="dot-ico" viewBox="0 0 10 10"><circle cx="5" cy="5" r="4.500" fill="#222"/><path d="M2.500 5h5" stroke="#fff" stroke-width="1.500"/></svg>
      <span class="dlg-title">EDIT FEATURE</span>
    </div>
    <div class="dlg-body">
      <div class="dlg-row"><span class="dlg-label">Target Body</span><div class="sel-field active"><svg class="cursor-ico"><use href="#i-cursor"/></svg><span>1 selected</span></div><span class="x-mark">✕</span></div>
      <div class="dlg-row"><span class="dlg-label">Tool Bodies</span><div class="sel-field"><svg class="cursor-ico"><use href="#i-cursor"/></svg><span>1 selected</span></div><span class="x-mark">✕</span></div>
      <div class="dlg-row"><span class="dlg-label">Operation</span><div class="dropdown"><svg class="cut-ico"><use href="#i-cut"/></svg><span>Cut</span><span class="caret"></span></div></div>
      <div class="dlg-row disabled"><span class="dlg-label">New Component</span><span class="check"></span></div>
      <div class="dlg-row"><span class="dlg-label">Keep Tools</span><span class="check"></span></div>
    </div>
    <div class="dlg-foot">
      <svg class="info" viewBox="0 0 12 12"><circle cx="6" cy="6" r="6" fill="#000"/><path d="M4.800 2h2.400v1.800H4.800zM4.300 5h2.900v3.800h.8V10H4.200V8.800h.8V6.200h-.7z" fill="#fff"/></svg>
      <button class="btn">OK</button>
      <button class="btn">Cancel</button>
    </div>
  </section>

  <div class="status">2 Bodies</div>
</main>

<footer class="timeline">
  <div class="playback">
    <svg class="pb" viewBox="0 0 12 16"><path d="M0 0h2v16H0zM12 0v16L3 8z" fill="#555"/></svg>
    <svg class="pb" viewBox="0 0 12 16"><path d="M8 0v16L0 8zM10 4h2v8h-2z" fill="#555"/></svg>
    <svg class="pb" viewBox="0 0 12 16"><path d="M0 0l12 8-12 8z" fill="#555"/></svg>
    <svg class="pb" viewBox="0 0 12 16"><path d="M4 0v16l8-8zM0 4h2v8H0z" fill="#555"/></svg>
    <svg class="pb" viewBox="0 0 12 16"><path d="M0 0v16l9-8zM10 0h2v16h-2z" fill="#555"/></svg>
  </div>
  <div class="track">
    <div class="segs">
      <div class="seg pink s1"><span class="hatch h1">///</span></div>
      <div class="seg red s2"></div>
      <div class="seg pink s3"></div>
      <div class="seg red s4"></div>
      <div class="seg pink s5"><span class="hatch h2">///</span></div>
    </div>
    <div class="steps">
      <div class="step"><svg class="tico"><use href="#t-image"/></svg></div>
      <div class="step"><svg class="tico"><use href="#t-sketch"/></svg></div>
      <div class="step"><svg class="tico"><use href="#t-extrude"/></svg></div>
      <div class="step"><svg class="tico"><use href="#t-joint"/></svg></div>
      <div class="step"><svg class="tico"><use href="#i-combine"/></svg></div>
      <div class="step"><svg class="tico"><use href="#t-sketch"/></svg></div>
      <div class="step"><svg class="tico"><use href="#t-wave"/></svg></div>
      <div class="step"><svg class="tico"><use href="#t-box"/></svg></div>
      <div class="step"><svg class="tico"><use href="#t-sketch"/></svg></div>
      <div class="step"><svg class="tico"><use href="#t-align-r"/></svg></div>
      <div class="step"><svg class="tico"><use href="#t-wave"/></svg></div>
      <div class="step"><svg class="tico"><use href="#t-ball"/></svg></div>
      <div class="step"><svg class="tico"><use href="#t-offset"/></svg></div>
      <div class="step"><svg class="tico"><use href="#t-sketch"/></svg></div>
      <div class="step"><svg class="tico"><use href="#t-extrude"/></svg></div>
      <div class="step"><svg class="tico"><use href="#t-move"/></svg></div>
      <div class="step"><svg class="tico"><use href="#t-align-b"/></svg></div>
      <div class="step"><svg class="tico"><use href="#t-move"/></svg></div>
      <div class="step"><svg class="tico"><use href="#t-align-b"/></svg></div>
      <div class="step"><svg class="tico"><use href="#t-move"/></svg></div>
      <div class="step"><svg class="tico"><use href="#i-combine"/></svg></div>
      <div class="step"><svg class="tico"><use href="#i-combine"/></svg></div>
      <div class="step"><svg class="tico"><use href="#t-sketch"/></svg></div>
      <div class="step"><svg class="tico"><use href="#t-extrude"/></svg></div>
      <div class="step"><svg class="tico"><use href="#t-move"/></svg></div>
      <div class="step"><svg class="tico"><use href="#t-chamfer"/></svg></div>
      <div class="step"><svg class="tico"><use href="#t-move"/></svg></div>
      <div class="step"><svg class="tico"><use href="#t-move"/></svg></div>
      <div class="step"><svg class="tico"><use href="#i-combine"/></svg></div>
      <div class="step"><svg class="tico"><use href="#t-sketch"/></svg></div>
      <div class="step"><svg class="tico"><use href="#t-extrude"/></svg></div>
      <div class="step"><svg class="tico"><use href="#t-sketch"/></svg></div>
      <div class="step"><svg class="tico"><use href="#t-diamond"/></svg></div>
      <div class="step"><svg class="tico"><use href="#t-sketch"/></svg></div>
      <div class="step"><svg class="tico"><use href="#t-extrude"/></svg></div>
      <div class="step"><svg class="tico"><use href="#i-combine"/></svg></div>
      <div class="step"><svg class="tico"><use href="#t-sketch"/></svg></div>
      <div class="step"><svg class="tico"><use href="#t-extrude"/></svg></div>
      <div class="step"><svg class="tico"><use href="#t-move"/></svg></div>
      <div class="step"><svg class="tico"><use href="#i-combine"/></svg></div>
    </div>
    <svg class="playhead" viewBox="0 0 12 32"><path d="M0 0h12L8 7H7v25H5V7H4z" fill="#666"/></svg>
  </div>
  <svg class="settings"><use href="#i-gear"/></svg>
</footer>
</body>
</html>
```
FILE: styles.css
```css
* { box-sizing: border-box; }
html, body { margin: 0; height: 100%; overflow: hidden; }
body {
  display: flex; flex-direction: column;
  width: 1920px; height: 976px;
  font-family: "Liberation Sans", Arial, sans-serif;
  font-size: 11px; color: #444; background: #f1f1f1;
}
.sprite { position: absolute; width: 0; height: 0; overflow: hidden; }
svg { display: block; flex: none; }

.caret {
  display: inline-block; flex: none; width: 0; height: 0;
  border-left: 3.5px solid transparent; border-right: 3.5px solid transparent;
  border-top: 4px solid #333;
}
.caret-light { border-top-color: #b5b5b5; margin-left: 8px; }

/* top bar */
.topbar { height: 26px; flex: none; display: flex; align-items: center; padding-left: 12px; background: #f1f1f1; }
.top-apps { width: 17px; height: 17px; margin-right: 24px; }
.top-file { width: 13px; height: 16px; margin-right: 7px; }
.top-caret-file { margin-right: 25px; }
.top-save { width: 16px; height: 16px; margin-right: 26px; }
.top-undo { width: 16px; height: 12px; margin-right: 7px; }
.top-caret-undo { margin-right: 14px; }
.top-redo { width: 16px; height: 12px; }
.top-rec { width: 17px; height: 17px; margin-left: auto; margin-right: 24px; }
.top-clock { width: 17px; height: 17px; margin-right: 4px; }
.top-count { font-size: 11px; margin-right: 31px; }
.top-user { font-size: 11px; letter-spacing: .1px; margin-right: 6px; }
.top-caret-user { margin-right: 21px; }
.top-help { width: 16px; height: 16px; margin-right: 6px; }
.topbar > .caret:last-child { margin-right: 10px; }
.help-q { font: bold 13px "Liberation Sans", sans-serif; fill: #f1f1f1; }

/* viewport */
.viewport { position: relative; flex: 1; overflow: hidden; background: #92b5eb; }
.scene { position: absolute; left: 0; top: 0; }
.cube-text { font: 9px "Liberation Sans", sans-serif; fill: #757d90; }
.cube-text.small { font-size: 8px; }
.axis-y { font: 13px "Liberation Sans", sans-serif; fill: #4cd98a; }
.axis-z { font: bold 15px "Liberation Sans", sans-serif; fill: #4a70e8; }

/* toolbar */
.toolbar {
  position: absolute; left: 4px; top: 4px; width: 994px; height: 60px;
  display: grid; grid-template-columns: 104px 136px 92px 135px 91px 95px 74px 64px 59px 74px 70px;
  background: #f1f1f1;
}
.tool-model { display: flex; align-items: center; padding-left: 6px; padding-bottom: 1px; }
.grip { width: 6px; height: 23px; border-left: 1px solid #c4c4c4; border-right: 1px solid #c4c4c4; margin-right: 25px; }
.model-label { font-weight: bold; font-size: 10.5px; color: #444; margin-right: 6px; }
.tool-sec { display: flex; flex-direction: column; align-items: center; justify-content: space-between; padding-top: 4px; border-left: 2px solid #dedede; margin: 2px 0 3px; }
.tool-icons { display: flex; justify-content: center; gap: 11px; }
.c-modify .tool-icons { margin-right: 2px; }
.ico32 { width: 32px; height: 32px; }
.tool-label { display: flex; align-items: center; gap: 3px; font-size: 10px; color: #49505f; white-space: nowrap; height: 13px; margin: 0 3px -2px 0; }
.c-create .tool-label { margin-right: 5px; }
.c-modify .tool-label { margin-right: 10px; }

/* panel head */
.browser { position: absolute; left: 4px; top: 68px; width: 299px; }
.panel-head { display: flex; align-items: center; width: 299px; height: 25px; background: #f1f1f1; border: 1px solid #cfcfcf; border-bottom-width: 2px; }
.rewind { width: 10px; height: 7px; margin: 0 9px 0 5px; }
.hidden { visibility: hidden; }
.panel-title { font-size: 10px; color: #666; flex: 1; }
.dot-ico { width: 10px; height: 10px; flex: none; }
.pin { width: 3px; height: 12px; margin: 0 1px 0 5px; border-left: 1px solid #888; border-right: 1px solid #ccc; flex: none; }
.comments { position: absolute; left: 4px; bottom: 4px; }

/* tree */
.tree { display: flex; flex-direction: column; gap: 4px; margin-top: 5px; margin-left: -4px; }
.node { display: flex; align-items: center; height: 20px; }
.d0 { margin-left: 21px; }
.d1 { margin-left: 39px; }
.d2 { margin-left: 57px; }
.d3 { margin-left: 94px; }
.exp { width: 11px; height: 12px; margin-right: 8px; }
.exp-o { width: 11px; height: 14px; margin: 0 8px 0 0; }
.pill { display: flex; align-items: center; height: 20px; background: #f1f1f1; padding: 0 0 0 5px; }
.w95 { width: 95px; } .w103 { width: 103px; } .w110 { width: 110px; } .w115 { width: 115px; } .w116 { width: 116px; }
.w119 { width: 119px; } .w131 { width: 131px; } .w133 { width: 133px; } .w134 { width: 134px; } .w148 { width: 148px; }
.strip { width: 5px; height: 20px; flex: none; margin-left: -5px; margin-right: 5px; }
.strip-blue { background: #8f8fff; }
.strip-red { background: #ee6b75; }
.strip-pink { background: #d99be0; width: 3px; height: 16px; margin-left: -3px; margin-right: 5px; }
.bulb { width: 12px; height: 17px; margin-right: 11px; }
.nico { width: 16px; height: 16px; margin-right: 14px; }
.nico.folder { width: 15px; height: 14px; margin-right: 15px; }
.plain { padding-left: 4px; }
.plain .nico { margin-right: 13px; }
.plain .folder { margin-right: 14px; }
.lbl { font-size: 11px; padding-top: 2px; text-rendering: geometricPrecision; color: #444; white-space: nowrap; }
.sel-grey { display: flex; align-items: center; height: 16px; width: 78px; padding-left: 3px; background: #9b9b9b; margin-left: -2px; }
.sel-grey .nico { margin-right: 15px; }
.sel-grey .lbl { color: #fff; font-weight: bold; font-size: 10.5px; }
.radio { width: 14px; height: 14px; margin-left: 4px; }
.body-pill .bulb { margin-right: 8px; }
.sel-blue, .sel-none { display: flex; align-items: center; height: 20px; width: 74px; padding-left: 3px; }
.sel-blue { background: #0696d7; }
.sel-blue .lbl { color: #fff; }

/* ghost notification */
.ghost { position: absolute; left: 3px; top: 811px; display: flex; align-items: center; gap: 10px; }
.ghost-box { width: 22px; height: 22px; background: #96b9f1; display: flex; align-items: center; justify-content: center; }
.ghost-dot { width: 6px; height: 6px; border-radius: 50%; background: #86a5da; }
.ghost-text { font-size: 12px; color: #85a4d9; }

/* navbar */
.navbar { position: absolute; left: 833px; top: 873px; width: 253px; height: 24px; background: #f1f1f1; display: flex; align-items: center; padding-left: 2px; }
.navbar .caret { margin-left: 1.5px; }
.navbar .caret-fit { margin-left: 4.5px; }
.nav-orbit { width: 20px; height: 20px; }
.nav-ico { width: 16px; height: 16px; margin-left: 10px; }
.navbar .caret + .nav-ico { margin-left: 6.5px; }
.navbar .caret + .nav-look { margin-left: 5px; }
.navbar .caret + .wide { margin-left: 13.5px; }

/* dialog */
.dialog { position: absolute; left: 1443px; top: 387px; width: 250px; height: 232px; display: flex; flex-direction: column; background: #f1f1f1; border: 1px solid #cdcdcd; }
.dlg-head { height: 24px; flex: none; display: flex; align-items: center; padding-left: 5px; border-bottom: 1px solid #cfcfcf; }
.dlg-title { font-size: 10px; letter-spacing: -.25px; color: #666; margin-left: 10px; }
.dlg-body { flex: 1; padding: 1px 0 0 12px; }
.dlg-row { display: flex; align-items: center; height: 27px; margin-bottom: 3px; }
.dlg-label { width: 93px; flex: none; font-size: 10.500px; color: #444; }
.disabled .dlg-label { color: #b0b0b0; }
.sel-field { width: 79px; height: 27px; display: flex; align-items: center; padding-left: 7px; gap: 4px; background: #fff; border: 2px solid #e3e3e3; font-size: 10.500px; color: #444; border-radius: 2px; }
.sel-field.active { background: #0696d7; border-color: #0696d7; color: #fff; }
.cursor-ico { width: 11px; height: 15px; color: #e8e8e8; }
.active .cursor-ico { color: #fff; }
.x-mark { margin-left: 10px; font: bold 13px "DejaVu Sans", sans-serif; color: #555; }
.dropdown { width: 130px; height: 28px; display: flex; align-items: center; padding: 0 5px 0 2px; gap: 4px; background: #fff; border: 2px solid #e3e3e3; border-radius: 2px; font-size: 10.500px; color: #444; }
.dropdown .caret { margin-left: auto; }
.cut-ico { width: 16px; height: 16px; }
.check { width: 14px; height: 14px; margin-left: 5px; border: 1px solid #555; border-radius: 3px; background: linear-gradient(#f6f6f6, #b4b4b4); }
.disabled .check { border-color: #c4c4c4; background: linear-gradient(#f0f0f0, #d8d8d8); }
.dlg-foot { height: 37px; flex: none; display: flex; align-items: center; padding: 0 11px 0 8px; gap: 10px; border-top: 1px solid #cfcfcf; }
.info { width: 12px; height: 12px; margin-right: auto; }
.btn { width: 60px; height: 19px; padding: 0; font: 12px "Liberation Sans", sans-serif; color: #666; background: #ececec; border: 1px solid #c6c6c6; }

.status { position: absolute; right: 35px; bottom: 10px; font-size: 11px; font-weight: bold; color: #333; }

/* timeline */
.timeline { position: relative; flex: none; height: 49px; display: flex; background: #f2f2f2; border-top: 2px solid #cccccc; }
.playback { width: 144px; flex: none; display: flex; gap: 13px; padding: 17px 0 0 11px; }
.pb { width: 12px; height: 16px; }
.track { position: relative; width: 964px; flex: none; padding-top: 7px; }
.track::after { content: ""; position: absolute; left: 3px; top: 39px; width: 944px; height: 2px; background: #ccc; }
.segs { display: flex; gap: 4px; height: 6px; }
.seg { position: relative; height: 6px; }
.pink { background: #d999e0; }
.red { background: #ef6c75; }
.s1 { width: 188px; } .s2 { width: 308px; } .s3 { width: 332px; } .s4 { width: 20px; } .s5 { width: 92px; }
.hatch { position: absolute; top: -3px; font: bold 9px "Liberation Sans", sans-serif; letter-spacing: 1px; color: #444; line-height: 9px; }
.h1 { left: 149px; }
.h2 { left: 29px; }
.steps { display: flex; margin-left: -2px; margin-top: 2px; }
.step { width: 24px; height: 24px; flex: none; display: flex; flex-direction: column; align-items: center; }
.step::after { content: ""; width: 1px; height: 5px; margin-top: 3px; background: #ccc; }
.tico { width: 16px; height: 16px; }
.playhead { position: absolute; left: 952px; top: 9px; width: 12px; height: 32px; }
.settings { position: absolute; right: 9px; top: 16px; width: 16px; height: 16px; }
```
